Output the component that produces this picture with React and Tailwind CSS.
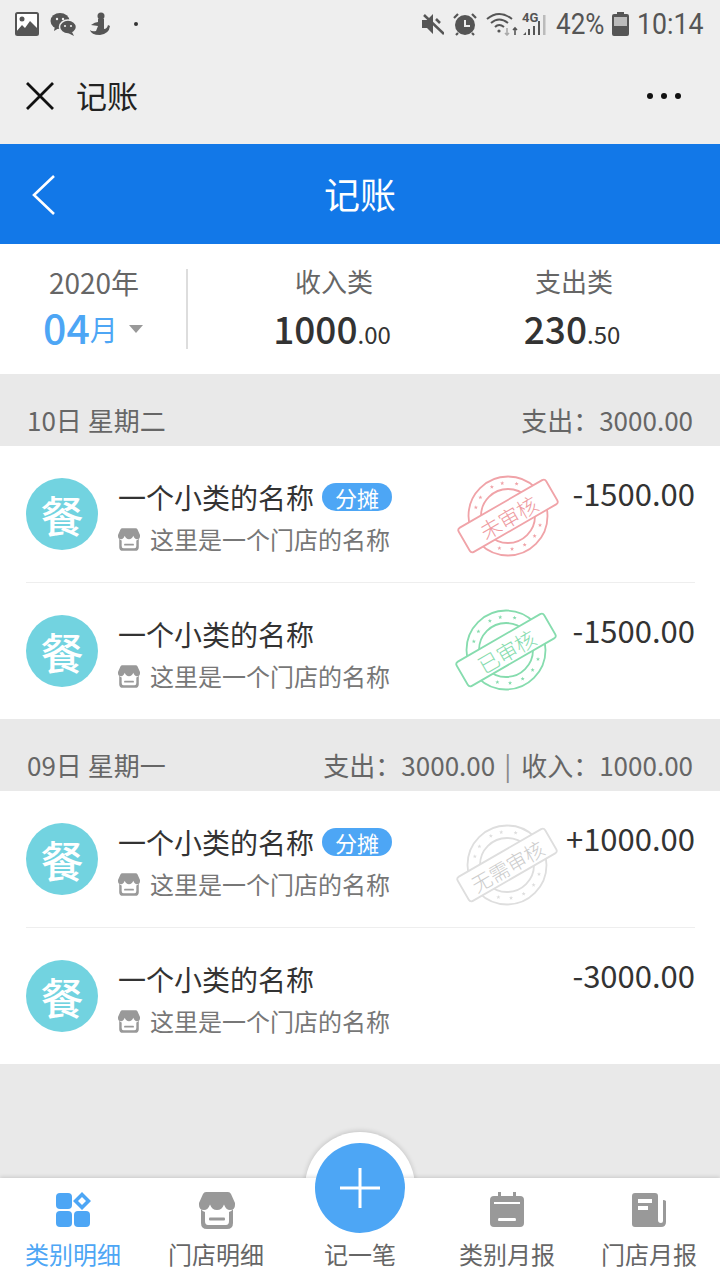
import React from "react";

const CJK = { fontFamily: '"Noto Sans CJK SC", "Noto Sans", sans-serif' };
const ROBOTO = { fontFamily: "Roboto, sans-serif" };

function StoreIcon({ className, fill = "#999" }) {
  return (
    <svg viewBox="0 0 36 37" className={className}>
      <path fill={fill} d="M7 0H29Q31 0 32 2L36 11V13Q36 18 31 18Q27 18 25 12.500Q23 18 18 18Q13 18 11 12.500Q9 18 5 18Q0 18 0 13V11L4 2Q5 0 7 0Z" />
      <path fill={fill} d="M2 17Q3.500 19.500 6 20V29Q6 33 9 33H27Q30 33 30 29V20Q32.500 19.500 34 17V31Q34 37 28 37H8Q2 37 2 31Z" />
      <rect x="10" y="25.500" width="16" height="3" rx="1" fill={fill} />
    </svg>
  );
}

function starPath(cx, cy, r) {
  let d = "";
  for (let i = 0; i < 10; i++) {
    const a = (-90 + i * 36) * (Math.PI / 180);
    const rad = i % 2 === 0 ? r : r * 0.42;
    d += `${i === 0 ? "M" : "L"}${(cx + rad * Math.cos(a)).toFixed(2)} ${(cy + rad * Math.sin(a)).toFixed(2)}`;
  }
  return d + "Z";
}

function Stamp({ color, textColor, label, size, className }) {
  const angles = [-165, -146, -119, -100, -75, 16, 37, 60, 83, 105];
  return (
    <svg viewBox="0 0 110 110" className={`absolute w-[110px] h-[110px] ${className}`}>
      <g transform="translate(55 55)">
        <circle r="39.500" fill="none" stroke={color} strokeWidth="1.800" />
        <circle r="27" fill="none" stroke={color} strokeWidth="1.800" />
        {angles.map((a) => (
          <path
            key={a}
            d={starPath(33.300 * Math.cos((a * Math.PI) / 180), 33.300 * Math.sin((a * Math.PI) / 180), 2.200)}
            fill={color}
          />
        ))}
        <g transform="rotate(-30)">
          <rect x="-50.500" y="-14" width="101" height="28" rx="3" fill="#fff" stroke={color} strokeWidth="1.800" />
          <text
            x="0"
            y="1"
            textAnchor="middle"
            dominantBaseline="central"
            fontSize={size}
            fontWeight="300"
            fill={textColor}
            style={CJK}
          >
            {label}
          </text>
        </g>
      </g>
    </svg>
  );
}

function Row({ badge, amount, stamp, divider, last }) {
  return (
    <div className={`relative bg-white ${last ? "h-[136px]" : "h-[137px]"}`}>
      <div className={`ml-[26px] mr-[25px] h-full flex items-start pt-[32px] ${divider ? "border-b border-[#eeeeee]" : ""}`}>
        <div className="w-[72px] h-[72px] rounded-full bg-[#72d3e0] flex items-center justify-center text-white text-[43px] leading-none font-medium shrink-0">
          餐
        </div>
        <div className="ml-[20px] flex-1 -mt-[1px]">
          <div className="flex items-center h-[40px]">
            <span className="text-[28px] leading-[40px] text-[#333333]">一个小类的名称</span>
            {badge && (
              <span className="ml-[8px] w-[70px] h-[28px] rounded-full bg-[#4da6f5] text-white text-[22px] leading-[28px] text-center">
                分摊
              </span>
            )}
          </div>
          <div className="flex items-center mt-[4px] h-[36px]">
            <StoreIcon className="w-[22px] h-[23px]" />
            <span className="ml-[10px] text-[24px] leading-[36px] text-[#777777]">这里是一个门店的名称</span>
          </div>
        </div>
        <div className="text-[31px] leading-[40px] text-[#333333] -mt-[5px]">{amount}</div>
      </div>
      {stamp}
    </div>
  );
}

function SectionHead({ left, right }) {
  return (
    <div className="h-[72px] pt-[20px] px-[27px] flex items-center justify-between text-[26px] leading-[44px] text-[#666666]">
      <span>{left}</span>
      <span>{right}</span>
    </div>
  );
}

function StatusBar() {
  return (
    <div className="h-[48px] flex items-center justify-between pl-[15px] pr-[17px] text-[#555555]">
      <div className="flex items-center">
        <svg viewBox="0 0 24 24" className="w-[24px] h-[24px]">
          <rect x="1" y="1" width="22" height="22" rx="1.500" fill="#fff" stroke="#555" strokeWidth="2" />
          <circle cx="7" cy="7" r="2.500" fill="#555" />
          <path fill="#555" d="M1 20L7 13L10 16L15 9L23 17V23H1Z" />
        </svg>
        <svg viewBox="0 0 27 24" className="ml-[11px] w-[27px] h-[24px]">
          <ellipse cx="10" cy="9" rx="9.500" ry="8" fill="#555" />
          <path fill="#555" d="M5 14L4 19L9 16Z" />
          <ellipse cx="18" cy="15" rx="8.500" ry="7" fill="#555" stroke="#eee" strokeWidth="1.500" />
          <path fill="#555" d="M22 20L24 24L18 21Z" />
          <circle cx="7" cy="7" r="1.200" fill="#eee" />
          <circle cx="13" cy="7" r="1.200" fill="#eee" />
          <circle cx="15" cy="14" r="1.100" fill="#eee" />
          <circle cx="21" cy="14" r="1.100" fill="#eee" />
        </svg>
        <svg viewBox="0 0 22 24" className="ml-[12px] w-[22px] h-[24px]">
          <circle cx="12" cy="4" r="3.500" fill="#555" />
          <path fill="#555" d="M9 7H15V17Q18 17 19 13L21 14Q20 22 11 23Q2 23 1 18Q3 20 7 19L9 14L2 13Q6 10 9 10Z" />
        </svg>
        <span className="ml-[23px] w-[4px] h-[4px] rounded-full bg-[#333333]" />
      </div>
      <div className="flex items-center">
        <svg viewBox="0 0 22 24" className="w-[22px] h-[24px]">
          <path fill="#555" d="M0 8H5L11 2V22L5 16H0Z" />
          <path d="M2 3L22 22" stroke="#555" strokeWidth="2.500" />
          <path d="M14 7L18 11" stroke="#555" strokeWidth="2.500" />
        </svg>
        <svg viewBox="0 0 24 24" className="ml-[9px] w-[24px] h-[24px]">
          <circle cx="12" cy="13" r="10" fill="#555" />
          <path d="M1 6L5 2M23 6L19 2M5 21L3 23M19 21L21 23" stroke="#555" strokeWidth="2.200" />
          <path d="M12 8V14H17" fill="none" stroke="#eee" strokeWidth="2" />
        </svg>
        <svg viewBox="0 0 32 24" className="ml-[9px] w-[32px] h-[24px]">
          <path d="M1 7Q13 -3 26 7M5 11Q13 4 22 11M9 15Q13 11 18 15" fill="none" stroke="#555" strokeWidth="2" />
          <circle cx="13" cy="19" r="1.600" fill="#555" />
          <path d="M21 16V23M19 21L21 23L23 21" fill="none" stroke="#aaa" strokeWidth="1.600" />
          <path d="M29 23V16M27 18L29 16L31 18" fill="none" stroke="#555" strokeWidth="1.600" />
        </svg>
        <div className="relative ml-[4px] w-[25px] h-[24px]">
          <span className="absolute left-0 top-[0px] text-[13px] leading-[12px] font-bold text-[#555555]" style={ROBOTO}>4G</span>
          <svg viewBox="0 0 25 24" className="w-[25px] h-[24px]">
            <path fill="#555" d="M1 23L4 20V23ZM6 23V17H8V23ZM11 23V14H13V23Z" />
            <path fill="#555" d="M16 23V9H18V23Z" />
            <path fill="#bbb" d="M21 23V3H23.500V23Z" />
          </svg>
        </div>
        <span className="ml-[9px] w-[47px] whitespace-nowrap origin-left scale-x-[0.87] text-[30px] leading-[36px] text-[#555555]" style={ROBOTO}>42%</span>
        <svg viewBox="0 0 17 24" className="ml-[9px] w-[17px] h-[24px]">
          <path fill="#555" d="M5 0H12V2H15Q17 2 17 4V22Q17 24 15 24H2Q0 24 0 22V4Q0 2 2 2H5Z" />
          <rect x="2" y="5" width="13" height="9" fill="#bbb" />
        </svg>
        <span className="ml-[8px] w-[66px] whitespace-nowrap origin-left scale-x-[0.89] text-[30px] leading-[36px] text-[#555555]" style={ROBOTO}>10:14</span>
      </div>
    </div>
  );
}

function TabItem({ width, label, active, children }) {
  return (
    <div className={`${width} flex flex-col items-center`}>
      <div className="h-[38px] mt-[13px] flex items-center justify-center">{children}</div>
      <span className={`mt-[7px] text-[24px] leading-[36px] ${active ? "text-[#4da6f5]" : "text-[#666666]"}`}>{label}</span>
    </div>
  );
}

export default function App() {
  return (
    <div className="w-[720px] h-[1280px] overflow-hidden flex flex-col bg-[#e9e9e9]" style={CJK}>
      <div className="bg-[#eeeeee]">
        <StatusBar />
        <div className="h-[96px] flex items-center pl-[26px] pr-[39px]">
          <svg viewBox="0 0 28 28" className="w-[28px] h-[28px]">
            <path d="M1 1L27 27M27 1L1 27" stroke="#111" strokeWidth="2.800" />
          </svg>
          <span className="ml-[22px] -mt-[3px] text-[31px] leading-none text-[#222222]">记账</span>
          <div className="ml-auto flex gap-[8px]">
            <span className="w-[6px] h-[6px] rounded-full bg-[#111111]" />
            <span className="w-[6px] h-[6px] rounded-full bg-[#111111]" />
            <span className="w-[6px] h-[6px] rounded-full bg-[#111111]" />
          </div>
        </div>
      </div>

      <div className="relative h-[100px] bg-[#1278e8] flex items-center justify-center">
        <svg viewBox="0 0 24 40" className="absolute left-[32px] top-[31px] w-[24px] h-[40px]">
          <path d="M22 1L2 20L22 39" fill="none" stroke="#fff" strokeWidth="2.600" />
        </svg>
        <span className="-mt-[2px] text-[36px] leading-none text-white">记账</span>
      </div>

      <div className="h-[130px] bg-white flex items-start">
        <div className="w-[186px] pl-[2px] pt-[18px] flex flex-col items-center">
          <span className="text-[28px] leading-[40px] text-[#666666]">2020年</span>
          <div className="flex items-end h-[46px] mt-[1px] -ml-[2px]">
            <span className="text-[41px] leading-[46px] text-[#4da6f5] font-medium">04</span>
            <span className="text-[28px] leading-[40px] text-[#4da6f5]">月</span>
            <span className="ml-[11px] mb-[16px] w-0 h-0 border-x-[7.5px] border-x-transparent border-t-[8px] border-t-[#999999]" />
          </div>
        </div>
        <div className="w-[2px] h-[80px] mt-[25px] bg-[#dddddd]" />
        <div className="ml-[26px] w-[240px] pt-[17px] flex flex-col items-center">
          <span className="text-[26px] leading-[40px] text-[#666666]">收入类</span>
          <div className="h-[46px] leading-[46px] mt-[4px] mr-[4px] text-[#333333]">
            <span className="text-[37px] font-medium">1000</span>
            <span className="text-[24px]">.00</span>
          </div>
        </div>
        <div className="w-[240px] pt-[17px] flex flex-col items-center">
          <span className="text-[26px] leading-[40px] text-[#666666]">支出类</span>
          <div className="h-[46px] leading-[46px] mt-[4px] mr-[4px] text-[#333333]">
            <span className="text-[37px] font-medium">230</span>
            <span className="text-[24px]">.50</span>
          </div>
        </div>
      </div>

      <SectionHead left="10日 星期二" right="支出：3000.00" />
      <Row
        badge
        divider
        amount="-1500.00"
        stamp={<Stamp color="#f0a3a8" textColor="#ee9aa0" label="未审核" size={21} className="left-[453px] top-[15px]" />}
      />
      <Row
        last
        amount="-1500.00"
        stamp={<Stamp color="#86dcae" textColor="#86dcae" label="已审核" size={21} className="left-[451px] top-[12px]" />}
      />

      <SectionHead
        left="09日 星期一"
        right={
          <>
            支出：3000.00<span className="ml-[9px] mr-[10px] text-[#888888]">|</span>收入：1000.00
          </>
        }
      />
      <Row
        badge
        divider
        amount="+1000.00"
        stamp={<Stamp color="#dedede" textColor="#cccccc" label="无需审核" size={20} className="left-[452px] top-[19px]" />}
      />
      <Row last amount="-3000.00" />

      <div className="relative mt-auto h-[102px]">
        <div className="absolute left-[305px] -top-[46px] w-[110px] h-[110px] rounded-full bg-white shadow-[0_-1px_5px_rgba(0,0,0,0.16)]" />
        <div className="relative h-full bg-white flex shadow-[0_-1px_4px_rgba(0,0,0,0.14)]">
          <TabItem width="w-[146px]" label="类别明细" active>
            <svg viewBox="0 0 36 36" className="ml-[2px] w-[36px] h-[36px]">
              <g fill="#4da6f5">
                <rect x="0" y="1" width="16" height="16" rx="4" />
                <rect x="0" y="19" width="16" height="16" rx="4" />
                <rect x="18" y="19" width="16" height="16" rx="4" />
                <path fillRule="evenodd" d="M26 0L35 9L26 18L17 9ZM26 5L22 9L26 13L30 9Z" />
              </g>
            </svg>
          </TabItem>
          <TabItem width="w-[140px]" label="门店明细">
            <StoreIcon className="ml-[2px] w-[36px] h-[37px]" />
          </TabItem>
          <TabItem width="w-[148px]" label="记一笔">
            <span className="w-[36px] h-[36px]" />
          </TabItem>
          <TabItem width="w-[146px]" label="类别月报">
            <svg viewBox="0 0 34 36" className="w-[34px] h-[36px]">
              <path fill="#999" fillRule="evenodd" d="M8 0H11V4H23V0H26V4H30Q34 4 34 8V31Q34 35 30 35H4Q0 35 0 31V8Q0 4 4 4H8ZM4 10V12H30V10ZM9 26Q8 26 8 28Q8 29 9 29H25Q26 29 26 28Q26 26 25 26Z" />
            </svg>
          </TabItem>
          <TabItem width="w-[138px]" label="门店月报">
            <svg viewBox="0 0 34 36" className="w-[34px] h-[36px]">
              <path fill="#999" fillRule="evenodd" d="M3 1H23Q26 1 26 4V28Q26 31 29 31Q31 31 31 29V8Q33 8 34 9V30Q34 35 29 35H3Q0 35 0 32V4Q0 1 3 1ZM6 7V11H20V7ZM6 14V18H16V14Z" />
            </svg>
          </TabItem>
        </div>
        <div className="absolute left-[315px] -top-[35px] w-[90px] h-[90px] rounded-full bg-[#4da6f5] flex items-center justify-center">
          <svg viewBox="0 0 40 40" className="w-[40px] h-[40px]">
            <path d="M20 0V40M0 20H40" stroke="#fff" strokeWidth="3" />
          </svg>
        </div>
      </div>
    </div>
  );
}
